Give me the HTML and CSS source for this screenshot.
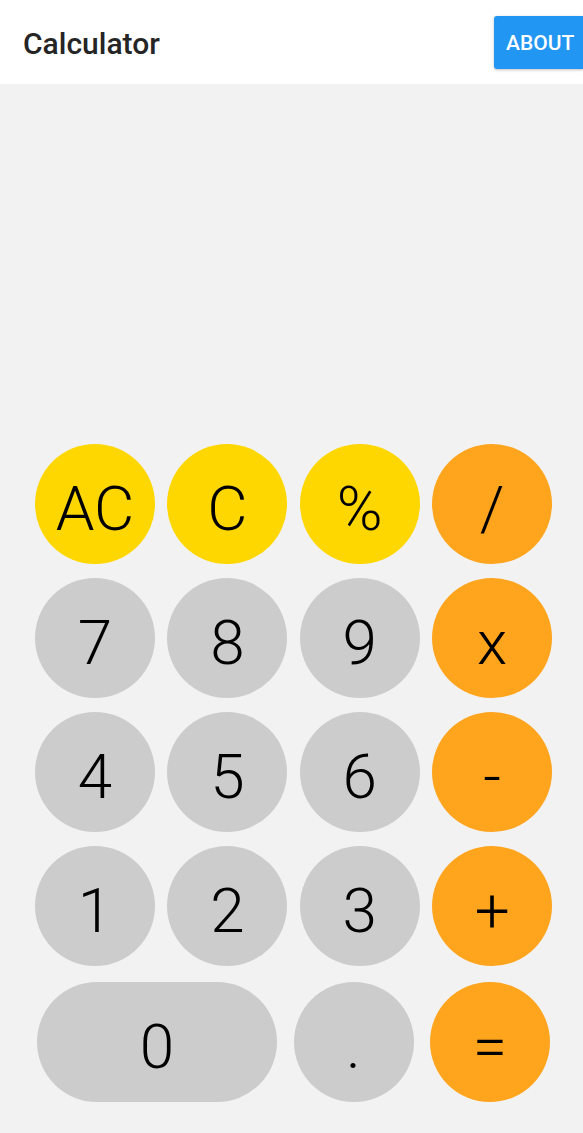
FILE: index.html
```html
<!DOCTYPE html>
<html>
<head>
<meta charset="utf-8">
<link rel="stylesheet" href="styles.css">
</head>
<body>
<div class="app">
  <header class="bar">
    <h1 class="title">Calculator</h1>
    <button class="about">ABOUT</button>
  </header>
  <main class="screen">
    <div class="display"></div>
    <div class="keys">
      <div class="row">
        <div class="key fn">AC</div>
        <div class="key fn">C</div>
        <div class="key fn">%</div>
        <div class="key op">/</div>
      </div>
      <div class="row">
        <div class="key num">7</div>
        <div class="key num">8</div>
        <div class="key num">9</div>
        <div class="key op">x</div>
      </div>
      <div class="row">
        <div class="key num">4</div>
        <div class="key num">5</div>
        <div class="key num">6</div>
        <div class="key op">-</div>
      </div>
      <div class="row">
        <div class="key num">1</div>
        <div class="key num">2</div>
        <div class="key num">3</div>
        <div class="key op">+</div>
      </div>
      <div class="row last">
        <div class="key num wide">0</div>
        <div class="key num">.</div>
        <div class="key op">=</div>
      </div>
    </div>
  </main>
</div>
</body>
</html>
```
FILE: styles.css
```css
html, body {
  margin: 0;
  padding: 0;
  background: #f2f2f2;
  overflow: hidden;
}
.app {
  width: 583px;
  height: 1133px;
  display: flex;
  flex-direction: column;
  font-family: Roboto, "Liberation Sans", sans-serif;
}
.bar {
  height: 84px;
  background: #ffffff;
  display: flex;
  align-items: center;
  justify-content: space-between;
  padding-left: 23px;
  box-sizing: border-box;
}
.title {
  margin: 2px 0 0 0;
  font-size: 30px;
  font-weight: 500;
  color: #252525;
  letter-spacing: 0;
}
.about {
  height: 53px;
  margin-top: 1px;
  width: 89px;
  padding: 0 0 0 12px;
  text-align: left;
  border: none;
  border-radius: 3px 0 0 3px;
  background: #2196f3;
  color: #ffffff;
  font-family: Roboto, "Liberation Sans", sans-serif;
  font-size: 21px;
  font-weight: 500;
  box-shadow: 0 1px 3px rgba(0,0,0,0.25);
}
.screen {
  flex: 1;
  display: flex;
  flex-direction: column;
}
.display {
  height: 360px;
}
.keys {
  display: flex;
  flex-direction: column;
  gap: 14px;
}
.row {
  display: flex;
  gap: 12.4px;
  padding-left: 35px;
}
.row.last {
  margin-top: 2px;
  gap: 16.5px;
  padding-left: 37px;
}
.key {
  width: 120px;
  height: 120px;
  box-sizing: border-box;
  padding-top: 10px;
  border-radius: 60px;
  display: flex;
  align-items: center;
  justify-content: center;
  font-size: 62px;
  font-weight: 300;
  color: #000000;
  line-height: 1;
}
.key.wide {
  width: 240px;
}
.fn { background: #ffd700; }
.op { background: #ffa41d; }
.num { background: #cccccc; }
```
